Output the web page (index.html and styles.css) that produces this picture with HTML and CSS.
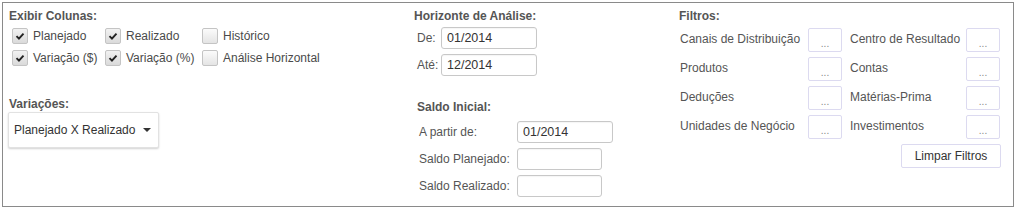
FILE: index.html
```html
<!DOCTYPE html>
<html lang="pt-BR">
<head>
    <meta charset="UTF-8">
    <title>Filtros do Relatório</title>
    <link rel="stylesheet" href="styles.css">
</head>
<body>
    <div class="panel">
        <!-- coluna 1: colunas e variações -->
        <div class="col col-cols">
            <div class="title">Exibir Colunas:</div>
            <div class="checks">
                <label class="check"><span class="box on"><svg viewBox="0 0 16 16"><path d="M4 8.2 L6.8 11 L12 5.2"/></svg></span>Planejado</label>
                <label class="check"><span class="box on"><svg viewBox="0 0 16 16"><path d="M4 8.2 L6.8 11 L12 5.2"/></svg></span>Realizado</label>
                <label class="check"><span class="box"></span>Histórico</label>
                <label class="check"><span class="box on"><svg viewBox="0 0 16 16"><path d="M4 8.2 L6.8 11 L12 5.2"/></svg></span>Variação ($)</label>
                <label class="check"><span class="box on"><svg viewBox="0 0 16 16"><path d="M4 8.2 L6.8 11 L12 5.2"/></svg></span>Variação (%)</label>
                <label class="check"><span class="box"></span>Análise Horizontal</label>
            </div>
            <div class="title title-var">Variações:</div>
            <div class="dropdown">
                <span>Planejado X Realizado</span>
                <span class="caret"></span>
            </div>
        </div>

        <!-- coluna 2: horizonte e saldo -->
        <div class="col col-hor">
            <div class="title">Horizonte de Análise:</div>
            <div class="form-rows horizon">
                <span class="lbl">De:</span><input class="input" value="01/2014">
                <span class="lbl">Até:</span><input class="input" value="12/2014">
            </div>
            <div class="title title-saldo">Saldo Inicial:</div>
            <div class="form-rows saldo">
                <span class="lbl">A partir de:</span><input class="input" value="01/2014">
                <span class="lbl">Saldo Planejado:</span><input class="input short" value="">
                <span class="lbl">Saldo Realizado:</span><input class="input short" value="">
            </div>
        </div>

        <!-- coluna 3: filtros -->
        <div class="col col-filt">
            <div class="title">Filtros:</div>
            <div class="filters">
                <span class="flbl">Canais de Distribuição</span><button class="dots">...</button>
                <span class="flbl">Centro de Resultado</span><button class="dots">...</button>
                <span class="flbl">Produtos</span><button class="dots">...</button>
                <span class="flbl">Contas</span><button class="dots">...</button>
                <span class="flbl">Deduções</span><button class="dots">...</button>
                <span class="flbl">Matérias-Prima</span><button class="dots">...</button>
                <span class="flbl">Unidades de Negócio</span><button class="dots">...</button>
                <span class="flbl">Investimentos</span><button class="dots">...</button>
                <button class="clear">Limpar Filtros</button>
            </div>
        </div>
    </div>
</body>
</html>
```

FILE: styles.css
```css
body {
    margin: 2px;
    font-family: "Liberation Sans", Arial, sans-serif;
    font-size: 12px;
    color: #555;
    background: #fff;
}
.panel {
    box-sizing: border-box;
    width: 1012px;
    height: 205px;
    border: 1px solid #8a8a8a;
    padding: 6px 0 0 6px;
    display: grid;
    grid-template-columns: 405px 265px 1fr;
}
.col {
    display: flex;
    flex-direction: column;
    align-items: flex-start;
}
.title {
    font-weight: bold;
    line-height: 14px;
    color: #555;
}
.checks {
    display: grid;
    grid-template-columns: 93px 97px auto;
    grid-auto-rows: 22px;
    margin: 2px 0 0 3px;
}
.check {
    display: flex;
    align-items: center;
    gap: 5px;
    color: #4a4a4a;
    white-space: nowrap;
}
.box {
    box-sizing: border-box;
    width: 16px;
    height: 16px;
    border: 1px solid #c4c4c4;
    border-radius: 2px;
    background: linear-gradient(#fbfbfb, #e4e4e4);
    display: flex;
}
.box.on {
    background: linear-gradient(#f2f2f2, #dadada);
}
.box svg {
    width: 14px;
    height: 14px;
}
.box path {
    fill: none;
    stroke: #222;
    stroke-width: 2.2;
}
.title-var {
    margin-top: 28px;
}
.dropdown {
    box-sizing: border-box;
    width: 151px;
    height: 36px;
    margin: 1px 0 0 -1px;
    padding: 0 7px 0 5px;
    display: flex;
    align-items: center;
    justify-content: space-between;
    background: #fff;
    border: 1px solid #e2e2e2;
    border-radius: 2px;
    box-shadow: 0 1px 2px rgba(0,0,0,0.18);
    color: #333;
    font-size: 12px;
}
.caret {
    width: 0;
    height: 0;
    border-left: 4px solid transparent;
    border-right: 4px solid transparent;
    border-top: 4px solid #333;
}
.form-rows {
    display: grid;
    grid-auto-rows: 22px;
    row-gap: 5px;
    align-items: center;
}
.horizon {
    grid-template-columns: 24px auto;
    margin: 4px 0 0 3px;
}
.saldo {
    grid-template-columns: 98px auto;
    margin: 7px 0 0 5px;
}
.lbl {
    color: #555;
    white-space: nowrap;
}
.input {
    box-sizing: border-box;
    width: 96px;
    height: 22px;
    border: 1px solid #c8c8c8;
    border-radius: 3px;
    padding: 0 5px;
    font-family: inherit;
    font-size: 12.5px;
    color: #333;
    box-shadow: inset 0 1px 1px rgba(0,0,0,0.04);
}
.input.short {
    width: 85px;
}
.title-saldo {
    margin: 24px 0 0 3px;
}
.filters {
    display: grid;
    grid-template-columns: 128px 34px 124px 34px;
    grid-auto-rows: 24px;
    row-gap: 5px;
    align-items: center;
    margin: 5px 0 0 1px;
}
.flbl {
    color: #555;
    white-space: nowrap;
    margin-top: -2px;
}
.filters span:nth-child(4n+3) {
    padding-left: 8px;
}
.dots {
    box-sizing: border-box;
    height: 24px;
    width: 34px;
    background: #fff;
    border: 1px solid #dcdaf0;
    border-radius: 2px;
    color: #888;
    font-family: inherit;
    font-size: 10px;
    padding: 6px 0 0;
}
.clear {
    grid-column: 1 / -1;
    justify-self: end;
    box-sizing: border-box;
    width: 100px;
    height: 24px;
    margin-right: -1px;
    background: #fff;
    border: 1px solid #dcdaf0;
    border-radius: 2px;
    color: #333;
    font-family: inherit;
    font-size: 12px;
}
```
